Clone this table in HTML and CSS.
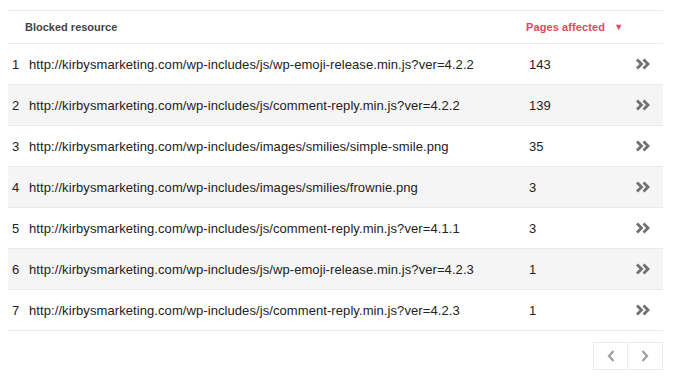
FILE: index.html
```html
<!DOCTYPE html>
<html lang="en">
<head>
  <meta charset="UTF-8" />
  <title>Blocked resources</title>
  <link rel="stylesheet" href="styles.css">
</head>
<body>
  <div class="table">
    <div class="row head">
      <span></span>
      <span class="h-res">Blocked resource</span>
      <span class="h-pages">Pages affected <span class="arrow">&#9660;</span></span>
      <span></span>
    </div>
    <div class="row">
      <span class="num">1</span>
      <span class="url">http://kirbysmarketing.com/wp-includes/js/wp-emoji-release.min.js?ver=4.2.2</span>
      <span class="pages">143</span>
      <span class="go"><svg width="15" height="12" viewBox="0 0 15 12"><path d="M1 1.5 L5.5 6 L1 10.5 M7.5 1.5 L12 6 L7.5 10.5" fill="none" stroke="#707070" stroke-width="2.8"/></svg></span>
    </div>
    <div class="row">
      <span class="num">2</span>
      <span class="url">http://kirbysmarketing.com/wp-includes/js/comment-reply.min.js?ver=4.2.2</span>
      <span class="pages">139</span>
      <span class="go"><svg width="15" height="12" viewBox="0 0 15 12"><path d="M1 1.5 L5.5 6 L1 10.5 M7.5 1.5 L12 6 L7.5 10.5" fill="none" stroke="#707070" stroke-width="2.8"/></svg></span>
    </div>
    <div class="row">
      <span class="num">3</span>
      <span class="url">http://kirbysmarketing.com/wp-includes/images/smilies/simple-smile.png</span>
      <span class="pages">35</span>
      <span class="go"><svg width="15" height="12" viewBox="0 0 15 12"><path d="M1 1.5 L5.5 6 L1 10.5 M7.5 1.5 L12 6 L7.5 10.5" fill="none" stroke="#707070" stroke-width="2.8"/></svg></span>
    </div>
    <div class="row">
      <span class="num">4</span>
      <span class="url">http://kirbysmarketing.com/wp-includes/images/smilies/frownie.png</span>
      <span class="pages">3</span>
      <span class="go"><svg width="15" height="12" viewBox="0 0 15 12"><path d="M1 1.5 L5.5 6 L1 10.5 M7.5 1.5 L12 6 L7.5 10.5" fill="none" stroke="#707070" stroke-width="2.8"/></svg></span>
    </div>
    <div class="row">
      <span class="num">5</span>
      <span class="url">http://kirbysmarketing.com/wp-includes/js/comment-reply.min.js?ver=4.1.1</span>
      <span class="pages">3</span>
      <span class="go"><svg width="15" height="12" viewBox="0 0 15 12"><path d="M1 1.5 L5.5 6 L1 10.5 M7.5 1.5 L12 6 L7.5 10.5" fill="none" stroke="#707070" stroke-width="2.8"/></svg></span>
    </div>
    <div class="row">
      <span class="num">6</span>
      <span class="url">http://kirbysmarketing.com/wp-includes/js/wp-emoji-release.min.js?ver=4.2.3</span>
      <span class="pages">1</span>
      <span class="go"><svg width="15" height="12" viewBox="0 0 15 12"><path d="M1 1.5 L5.5 6 L1 10.5 M7.5 1.5 L12 6 L7.5 10.5" fill="none" stroke="#707070" stroke-width="2.8"/></svg></span>
    </div>
    <div class="row">
      <span class="num">7</span>
      <span class="url">http://kirbysmarketing.com/wp-includes/js/comment-reply.min.js?ver=4.2.3</span>
      <span class="pages">1</span>
      <span class="go"><svg width="15" height="12" viewBox="0 0 15 12"><path d="M1 1.5 L5.5 6 L1 10.5 M7.5 1.5 L12 6 L7.5 10.5" fill="none" stroke="#707070" stroke-width="2.8"/></svg></span>
    </div>
  </div>

  <div class="pager">
    <button class="page-btn"><svg width="8" height="12" viewBox="0 0 8 12"><path d="M6.5 1 L2 6 L6.5 11" fill="none" stroke="#a0a0a0" stroke-width="2.2"/></svg></button>
    <button class="page-btn"><svg width="8" height="12" viewBox="0 0 8 12"><path d="M1.5 1 L6 6 L1.5 11" fill="none" stroke="#a0a0a0" stroke-width="2.2"/></svg></button>
  </div>
</body>
</html>
```

FILE: styles.css
```css
body {
  margin: 0;
  background: #fff;
  font-family: Arial, "Liberation Sans", sans-serif;
  color: #222;
}

.table {
  margin: 10px 0 0 8px;
  width: 655px;
  border-top: 1px solid #ebebeb;
}

.row {
  display: grid;
  grid-template-columns: 21px 500px 105px 1fr;
  align-items: center;
  height: 40px;
  border-bottom: 1px solid #ebebeb;
  font-size: 13px;
}

.row:nth-child(odd) {
  background: #f5f5f5;
}

.row.head {
  height: 32px;
  background: #fff;
  font-size: 11px;
  font-weight: bold;
  color: #444;
}

.url {
  letter-spacing: 0.08px;
}

.h-res {
  margin-left: -4px;
}

.h-pages {
  margin-left: -3px;
  letter-spacing: 0.1px;
  color: #dd4b5a;
}

.arrow {
  font-size: 9px;
  margin-left: 6px;
  position: relative;
  top: -1px;
}

.num {
  padding-left: 4px;
}

.go {
  display: flex;
  padding-left: 2px;
}

.pager {
  display: flex;
  justify-content: flex-end;
  width: 663px;
  margin-top: 11px;
}

.page-btn {
  width: 35px;
  height: 28px;
  margin: 0;
  padding: 0;
  background: #fff;
  border: 1px solid #ebebeb;
  display: flex;
  align-items: center;
  justify-content: center;
}

.page-btn + .page-btn {
  border-left: none;
}
```
